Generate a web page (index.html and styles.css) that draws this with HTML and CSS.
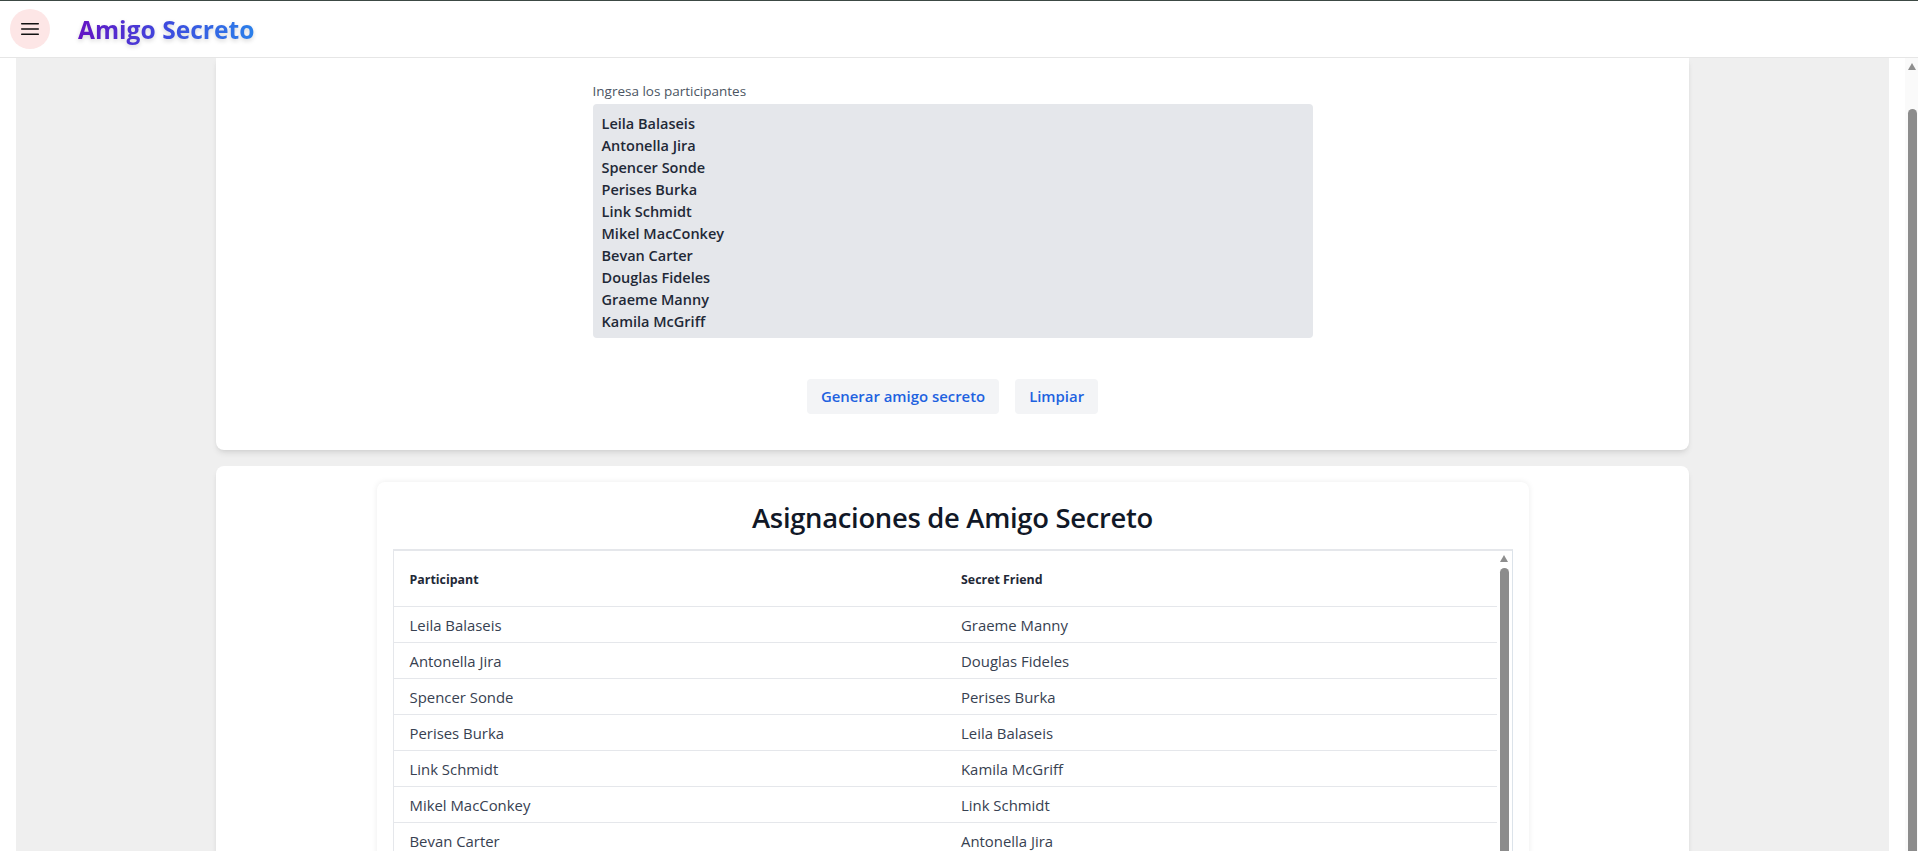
FILE: index.html
```html
<!DOCTYPE html>
<html lang="es">
<head>
<meta charset="utf-8">
<title>Amigo Secreto</title>
<link rel="stylesheet" href="styles.css">
</head>
<body>
<header class="topbar">
  <button class="menu-btn" aria-label="Menú">
    <svg viewBox="0 0 24 24" width="24" height="24" fill="none" stroke="#111" stroke-width="1.6" stroke-linecap="round"><path d="M3.75 6.75h16.5M3.75 12h16.5M3.75 17.25h16.5"/></svg>
  </button>
  <h1 class="brand">Amigo Secreto</h1>
</header>
<div class="viewport">
  <main class="main">
    <div class="canvas">
      <section class="card card-form">
        <div class="form">
          <label class="label" for="names">Ingresa los participantes</label>
          <textarea id="names" class="names" rows="10">Leila Balaseis
Antonella Jira
Spencer Sonde
Perises Burka
Link Schmidt
Mikel MacConkey
Bevan Carter
Douglas Fideles
Graeme Manny
Kamila McGriff</textarea>
          <div class="actions">
            <button class="btn">Generar amigo secreto</button>
            <button class="btn">Limpiar</button>
          </div>
        </div>
      </section>
      <section class="card card-results">
        <div class="panel">
          <h2 class="panel-title">Asignaciones de Amigo Secreto</h2>
          <div class="table-box">
            <table class="pairs">
              <thead>
                <tr><th>Participant</th><th>Secret Friend</th></tr>
              </thead>
              <tbody>
                <tr><td>Leila Balaseis</td><td>Graeme Manny</td></tr>
                <tr><td>Antonella Jira</td><td>Douglas Fideles</td></tr>
                <tr><td>Spencer Sonde</td><td>Perises Burka</td></tr>
                <tr><td>Perises Burka</td><td>Leila Balaseis</td></tr>
                <tr><td>Link Schmidt</td><td>Kamila McGriff</td></tr>
                <tr><td>Mikel MacConkey</td><td>Link Schmidt</td></tr>
                <tr><td>Bevan Carter</td><td>Antonella Jira</td></tr>
                <tr><td>Douglas Fideles</td><td>Spencer Sonde</td></tr>
                <tr><td>Graeme Manny</td><td>Mikel MacConkey</td></tr>
                <tr><td>Kamila McGriff</td><td>Bevan Carter</td></tr>
              </tbody>
            </table>
            <div class="scrollbar scrollbar-table" aria-hidden="true">
              <span class="sb-arrow"></span>
              <span class="sb-thumb"></span>
            </div>
          </div>
        </div>
      </section>
    </div>
  </main>
  <div class="scrollbar scrollbar-page" aria-hidden="true">
    <span class="sb-arrow"></span>
    <span class="sb-thumb"></span>
  </div>
</div>
</body>
</html>
```
FILE: styles.css
```css
* { box-sizing: border-box; }

html, body {
  margin: 0;
  height: 100%;
  overflow: hidden;
}

body {
  font-family: "Open Sans", "Noto Sans", sans-serif;
  color: #1f2937;
  background: #ffffff;
  display: flex;
  flex-direction: column;
}

/* ---------- top bar ---------- */
.topbar {
  flex: none;
  height: 58px;
  display: flex;
  align-items: center;
  padding-left: 10px;
  border-top: 1px solid #3c4944;
  border-bottom: 1px solid #e6e6e6;
  background: #ffffff;
}

.menu-btn {
  width: 40px;
  height: 40px;
  border: 0;
  padding: 0;
  border-radius: 50%;
  background: #fde6e6;
  display: flex;
  align-items: center;
  justify-content: center;
}

.brand {
  margin: 0 0 0 28px;
  padding-top: 1px;
  font-size: 24.6px;
  line-height: 33px;
  font-weight: 700;
  background: linear-gradient(90deg, #6414c4 0%, #3d4ade 50%, #2b80ea 100%);
  -webkit-background-clip: text;
  background-clip: text;
  -webkit-text-fill-color: transparent;
  color: transparent;
  filter: drop-shadow(0 2px 2px rgba(0, 0, 0, 0.16));
}

/* ---------- scroll area ---------- */
.viewport {
  flex: 1;
  min-height: 0;
  display: flex;
}

.main {
  flex: 1;
  min-width: 0;
  padding: 0 16px;
  overflow: hidden;
  background: #ffffff;
}

.canvas {
  min-height: 100%;
  background: #efefef;
  padding: 0 200px 0 200px;
  display: flex;
  flex-direction: column;
  gap: 16px;
}

.card {
  background: #ffffff;
  border-radius: 8px;
  box-shadow: 0 4px 6px -1px rgba(0, 0, 0, 0.09), 0 2px 4px -2px rgba(0, 0, 0, 0.08);
}

/* ---------- form card ---------- */
.card-form {
  border-top-left-radius: 0;
  border-top-right-radius: 0;
  padding: 23px 0 36px;
}

.form {
  width: 720px;
  margin: 0 auto;
  display: flex;
  flex-direction: column;
}

.label {
  font-size: 13.5px;
  line-height: 20px;
  color: #4b5563;
  margin-bottom: 3px;
}

.names {
  display: block;
  width: 100%;
  height: 234px;
  padding: 9px 9px 5px;
  border: 0;
  border-radius: 4px;
  background: #e5e7eb;
  font-family: "Open Sans", "Noto Sans", sans-serif;
  font-size: 14.5px;
  font-weight: 600;
  line-height: 22px;
  color: #1f2937;
  resize: none;
  overflow: hidden;
  outline: none;
}

.actions {
  margin-top: 41px;
  display: flex;
  justify-content: center;
  gap: 16px;
}

.btn {
  border: 0;
  border-radius: 4px;
  background: #f3f4f6;
  color: #1e62e0;
  font-family: "Open Sans", "Noto Sans", sans-serif;
  font-size: 14.9px;
  font-weight: 600;
  line-height: 21px;
  padding: 7px 14px;
}

/* ---------- results card ---------- */
.card-results {
  padding: 16px;
  flex: 1;
}

.panel {
  max-width: 1152px;
  margin: 0 auto;
  padding: 16px;
  border-radius: 8px;
  background: #ffffff;
  box-shadow: 0 0 6px rgba(0, 0, 0, 0.08);
}

.panel-title {
  margin: 0 0 11px;
  text-align: center;
  font-size: 27.4px;
  line-height: 40px;
  font-weight: 600;
  letter-spacing: -0.3px;
  color: #111827;
}

.table-box {
  display: flex;
  border: 1px solid #e5e7eb;
  border-top-width: 2px;
  border-right-color: #dce3ea;
  border-bottom: 0;
}

.pairs {
  flex: 1;
  border-collapse: separate;
  border-spacing: 0;
  table-layout: fixed;
}

.pairs th,
.pairs td {
  width: 50%;
  text-align: left;
  border-bottom: 1px solid #e5e7eb;
  padding: 0 16px;
}

.pairs th {
  font-size: 12.4px;
  font-weight: 700;
  line-height: 20px;
  color: #1f2937;
  padding-top: 19px;
  padding-bottom: 16px;
}

.pairs td {
  font-size: 14.9px;
  line-height: 20px;
  color: #374151;
  padding-top: 8px;
  padding-bottom: 7px;
}

/* ---------- drawn scrollbars ---------- */
.scrollbar {
  flex: none;
  display: flex;
  flex-direction: column;
  align-items: flex-start;
}

.sb-arrow {
  width: 0;
  height: 0;
  border-left: 4.5px solid transparent;
  border-right: 4.5px solid transparent;
  border-bottom: 7px solid #8e8e8e;
}

.sb-thumb {
  width: 9px;
  flex: 1;
  background: #8c8c8c;
  border-radius: 5px 5px 0 0;
}

.scrollbar-table {
  width: 15px;
  padding: 4px 0 0 3px;
  background: #ffffff;
}

.scrollbar-table .sb-thumb {
  margin-top: 6px;
}

.scrollbar-page {
  width: 13px;
  padding: 5px 0 0 3px;
  background: #fafafa;
}

.scrollbar-page .sb-thumb {
  margin-top: 39px;
}
```
